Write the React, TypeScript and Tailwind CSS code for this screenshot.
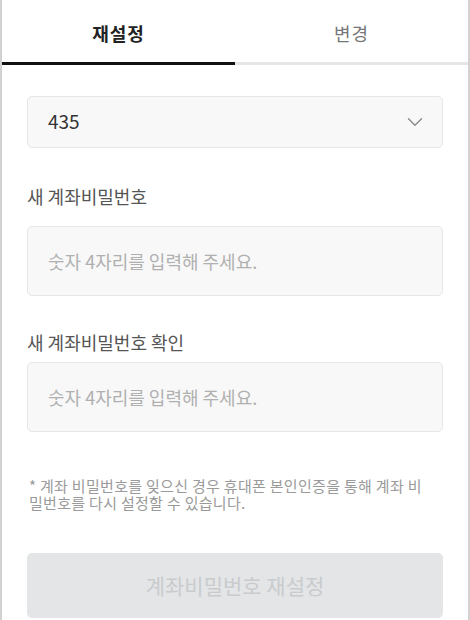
import { ChevronDown } from "lucide-react";

const font = { fontFamily: '"Noto Sans CJK KR", "Noto Sans", sans-serif' };

function PinInput({ placeholder }: { placeholder: string }) {
  return (
    <div className="h-[70px] rounded-[5px] border border-[#e6e6e6] bg-[#f8f8f8] flex items-center px-5">
      <input
        type="password"
        placeholder={placeholder}
        className="w-full bg-transparent outline-none text-[18px] text-[#333] placeholder:text-[#b0b0b0]"
        style={font}
      />
    </div>
  );
}

export default function App() {
  return (
    <div className="w-[470px] h-[620px] overflow-hidden bg-white border-x-2 border-[#d2d2d2]" style={font}>
      {/* Tabs */}
      <div className="flex">
        <div className="flex-1 h-[65px] flex items-center justify-center border-b-[3px] border-[#111] pt-1">
          <span className="text-[18px] font-bold text-[#222] tracking-[1px]">재설정</span>
        </div>
        <div className="flex-1 h-[65px] flex items-center justify-center border-b-[3px] border-[#e6e6e6] pt-1">
          <span className="text-[18px] text-[#777] tracking-[1px]">변경</span>
        </div>
      </div>

      <div className="px-[25px]">
        {/* Account select */}
        <div className="mt-[31px] h-[52px] rounded-[5px] border border-[#e6e6e6] bg-[#f8f8f8] flex items-center justify-between pl-5 pr-[14px]">
          <span className="text-[19px] leading-[22px] text-[#333] -mt-[3px]">435</span>
          <ChevronDown size={26} strokeWidth={1.3} className="text-[#8a8a8a]" />
        </div>

        <div className="mt-[37px] text-[18px] leading-[22px] text-[#555]">새 계좌비밀번호</div>
        <div className="mt-[19px]">
          <PinInput placeholder="숫자 4자리를 입력해 주세요." />
        </div>

        <div className="mt-[35px] text-[18px] leading-[22px] text-[#555]">새 계좌비밀번호 확인</div>
        <div className="mt-[9px]">
          <PinInput placeholder="숫자 4자리를 입력해 주세요." />
        </div>

        <p className="mt-[45px] text-[15px] leading-[17px] tracking-[0.3px] text-[#9a9a9a] pl-[2px] pr-[8px]">
          * 계좌 비밀번호를 잊으신 경우 휴대폰 본인인증을 통해 계좌 비밀번호를 다시 설정할 수 있습니다.
        </p>

        <button
          disabled
          className="mt-[42px] w-full h-[65px] rounded-[5px] bg-[#e3e5e7] text-[21px] text-[#c9cbcd]"
          style={font}
        >
          계좌비밀번호 재설정
        </button>
      </div>
    </div>
  );
}
